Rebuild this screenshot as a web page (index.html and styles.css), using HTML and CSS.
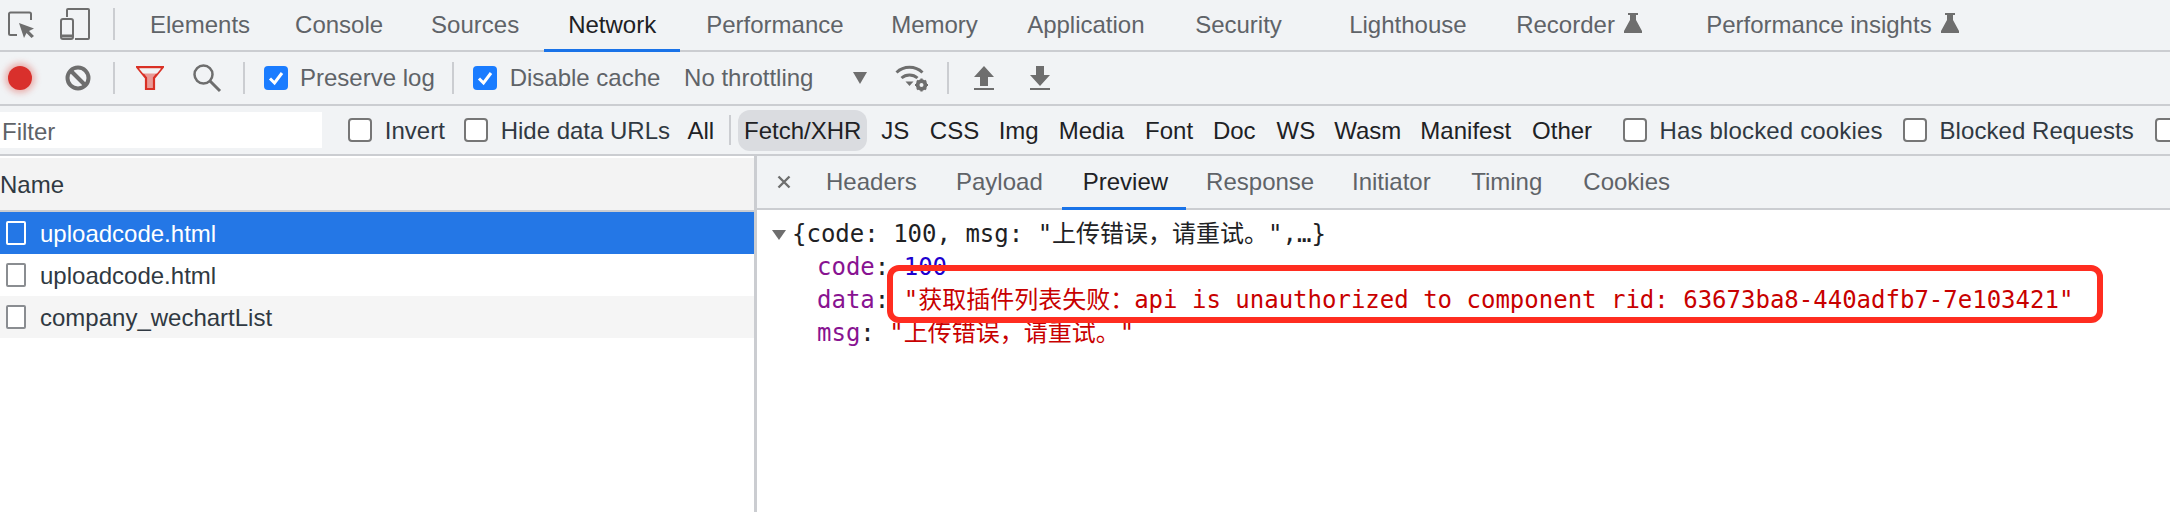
FILE: index.html
```html
<!DOCTYPE html>
<html lang="en">
<head>
<meta charset="utf-8">
<title>DevTools Network</title>
<link rel="stylesheet" href="styles.css">
</head>
<body>
<div class="devtools">
  <div class="bar tabs-main">
    <svg class="ic-inspect" width="28" height="28" viewBox="0 0 28 28"><path d="M9 24H2.500A1.500 1.500 0 0 1 1 22.500V3a1.500 1.500 0 0 1 1.500-1.500h19A1.500 1.500 0 0 1 23 3v6" fill="none" stroke="#6e6e6e" stroke-width="2"/><path d="M11 12l15 5.500-5 2.500 5 5-2.500 2-5-5-2.500 5z" fill="#6e6e6e"/></svg>
    <svg class="ic-device" width="30" height="32" viewBox="0 0 30 32"><path d="M7 9V2a1 1 0 0 1 1-1h20a1 1 0 0 1 1 1v28a1 1 0 0 1-1 1H15" fill="none" stroke="#6e6e6e" stroke-width="2"/><rect x="1" y="11" width="12" height="20" rx="2" fill="none" stroke="#6e6e6e" stroke-width="2"/><path d="M1 28h12" stroke="#6e6e6e" stroke-width="3"/></svg>
    <span class="vdiv first-div"></span>
    <span class="tab t-elements">Elements</span>
    <span class="tab t-console">Console</span>
    <span class="tab t-sources">Sources</span>
    <span class="tab t-network active">Network</span>
    <span class="tab t-performance">Performance</span>
    <span class="tab t-memory">Memory</span>
    <span class="tab t-application">Application</span>
    <span class="tab t-security">Security</span>
    <span class="tab t-lighthouse">Lighthouse</span>
    <span class="tab t-recorder">Recorder</span>
    <svg class="flask" width="18" height="20" viewBox="0 0 18 20"><path d="M4 0h10v2h-2v5l6 11v2H0v-2L6 7V2H4z" fill="#6e6e6e"/></svg>
    <span class="tab t-insights">Performance insights</span>
    <svg class="flask" width="18" height="20" viewBox="0 0 18 20"><path d="M4 0h10v2h-2v5l6 11v2H0v-2L6 7V2H4z" fill="#6e6e6e"/></svg>
  </div>

  <div class="bar toolbar">
    <span class="record"></span>
    <svg class="ic-clear" width="26" height="26" viewBox="0 0 26 26"><circle cx="13" cy="13" r="10.500" fill="none" stroke="#6e6e6e" stroke-width="4"/><path d="M6 6l14 14" stroke="#6e6e6e" stroke-width="4"/></svg>
    <span class="vdiv d-clear"></span>
    <svg class="ic-funnel" width="28" height="24" viewBox="0 0 28 24"><path d="M1 1h26L18 12v11h-8V12z" fill="#e99a96" stroke="#d93025" stroke-width="2.200"/><path d="M3 2.500h22l-4 5H7z" fill="#f1f3f4"/></svg>
    <svg class="ic-search" width="30" height="30" viewBox="0 0 30 30"><circle cx="11.500" cy="11.500" r="9" fill="none" stroke="#6e6e6e" stroke-width="2.500"/><path d="M18 18l10 10" stroke="#6e6e6e" stroke-width="3"/></svg>
    <span class="vdiv d-search"></span>
    <span class="cb on c-preserve"><svg width="24" height="24" viewBox="0 0 24 24"><path d="M6 12.500l4.500 4.500L18 7" fill="none" stroke="#fff" stroke-width="3"/></svg></span>
    <span class="lbl l-preserve">Preserve log</span>
    <span class="vdiv d-preserve"></span>
    <span class="cb on c-disable"><svg width="24" height="24" viewBox="0 0 24 24"><path d="M6 12.500l4.500 4.500L18 7" fill="none" stroke="#fff" stroke-width="3"/></svg></span>
    <span class="lbl l-disable">Disable cache</span>
    <span class="lbl l-throttle">No throttling</span>
    <span class="caret"></span>
    <svg class="ic-wifi" width="34" height="28" viewBox="0 0 34 28"><path d="M1.500 8.500a19 19 0 0 1 26 0M6.500 14a12 12 0 0 1 16 0" fill="none" stroke="#6e6e6e" stroke-width="3"/><path d="M10.500 17.500h8l-4 4.500z" fill="#6e6e6e"/><circle cx="26.500" cy="21" r="4.300" fill="none" stroke="#6e6e6e" stroke-width="3"/><path d="M26.500 14.500v13M20 21h13M22 16.500l9 9M31 16.500l-9 9" stroke="#6e6e6e" stroke-width="2.200"/><circle cx="26.500" cy="21" r="2" fill="#f1f3f4"/></svg>
    <span class="vdiv d-wifi"></span>
    <svg class="ic-up" width="20" height="24" viewBox="0 0 20 24"><path d="M10 0l10 11h-6v9H6v-9H0z" fill="#6e6e6e"/><path d="M0 23h20" stroke="#6e6e6e" stroke-width="2"/></svg>
    <svg class="ic-down" width="20" height="24" viewBox="0 0 20 24"><path d="M6 0h8v9h6L10 20 0 9h6z" fill="#6e6e6e"/><path d="M0 23h20" stroke="#6e6e6e" stroke-width="2"/></svg>
  </div>

  <div class="bar filters">
    <span class="filter-input">Filter</span>
    <span class="cb c-invert"></span><span class="flbl l-invert">Invert</span>
    <span class="cb c-hide"></span><span class="flbl l-hide">Hide data URLs</span>
    <span class="ft f-all">All</span>
    <span class="vdiv d-all"></span>
    <span class="ft pill">Fetch/XHR</span>
    <span class="ft f-js">JS</span>
    <span class="ft f-css">CSS</span>
    <span class="ft f-img">Img</span>
    <span class="ft f-media">Media</span>
    <span class="ft f-font">Font</span>
    <span class="ft f-doc">Doc</span>
    <span class="ft f-ws">WS</span>
    <span class="ft f-wasm">Wasm</span>
    <span class="ft f-manifest">Manifest</span>
    <span class="ft f-other">Other</span>
    <span class="cb c-cookies"></span><span class="flbl l-cookies">Has blocked cookies</span>
    <span class="cb c-blocked"></span><span class="flbl l-blocked">Blocked Requests</span>
    <span class="cb c-last"></span>
  </div>

  <div class="main">
    <section class="list">
      <div class="list-head">Name</div>
      <div class="row selected"><span class="file"></span><span class="fname">uploadcode.html</span></div>
      <div class="row"><span class="file"></span><span class="fname">uploadcode.html</span></div>
      <div class="row odd"><span class="file"></span><span class="fname">company_wechartList</span></div>
    </section>
    <section class="detail">
      <div class="detail-tabs">
        <svg class="ic-close" width="14" height="14" viewBox="0 0 14 14"><path d="M1.500 1.500l11 11M12.500 1.500l-11 11" stroke="#6e6e6e" stroke-width="2.400"/></svg>
        <span class="tab d-headers">Headers</span>
        <span class="tab d-payload">Payload</span>
        <span class="tab d-preview active">Preview</span>
        <span class="tab d-response">Response</span>
        <span class="tab d-initiator">Initiator</span>
        <span class="tab d-timing">Timing</span>
        <span class="tab d-cookies">Cookies</span>
      </div>
      <div class="tree">
        <div class="line top"><span class="tri"></span>{code: 100, msg: "上传错误，请重试。",…}</div>
        <div class="line child"><span class="key">code</span>: <span class="num">100</span></div>
        <div class="line child"><span class="key">data</span>: <span class="str">"获取插件列表失败：api is unauthorized to component rid: 63673ba8-440adfb7-7e103421"</span></div>
        <div class="line child"><span class="key">msg</span>: <span class="str">"上传错误，请重试。"</span></div>
      </div>
    </section>
    <div class="annotation"></div>
  </div>
</div>
</body>
</html>
```
FILE: styles.css
```css
* { box-sizing: border-box; }
html, body { margin: 0; padding: 0; background: #fff; }
body { width: 2170px; height: 512px; overflow: hidden; }
.devtools {
  width: 2170px;
  height: 512px;
  display: flex;
  flex-direction: column;
  font-family: "Liberation Sans", Arial, sans-serif;
  font-size: 24px;
  color: #5f6368;
}
.bar {
  display: flex;
  align-items: center;
  background: #f1f3f5;
  white-space: nowrap;
  flex: none;
}
.vdiv { flex: none; width: 2px; height: 32px; background: #cbcdd1; }

/* top tabs */
.tabs-main { height: 52px; border-bottom: 2px solid #cbcdd1; padding-left: 8px; }
.tabs-main svg { flex: none; }
.ic-device { margin-left: 24px; margin-top: -2px; }
.first-div { margin-left: 23px; margin-top: -2px; }
.tab { flex: none; height: 100%; display: flex; align-items: center; position: relative; }
.active { color: #202124; }
.active::after { content: ""; position: absolute; left: 0; right: 0; bottom: -2px; height: 3px; background: #1a73e8; }
.t-elements { margin-left: 35px; }
.t-console { margin-left: 45px; }
.t-sources { margin-left: 48px; }
.t-network { margin-left: 25px; padding: 0 24px; }
.t-performance { margin-left: 26px; }
.t-memory { margin-left: 47.600px; }
.t-application { margin-left: 49.300px; }
.t-security { margin-left: 50.600px; }
.t-lighthouse { margin-left: 67.300px; }
.t-recorder { margin-left: 49.600px; }
.tabs-main .flask { margin-left: 9.300px; margin-top: -4px; }
.t-insights { margin-left: 64px; }

/* toolbar */
.toolbar { height: 54px; border-bottom: 2px solid #cbcdd1; padding-left: 8px; }
.record {
  flex: none;
  width: 24px;
  height: 24px;
  border-radius: 50%;
  background: #d9302c;
  box-shadow: 0 0 6px 3px rgba(217, 48, 37, .35);
}
.ic-clear { flex: none; margin-left: 33px; }
.d-clear { margin-left: 22px; }
.ic-funnel { flex: none; margin-left: 21px; }
.ic-search { flex: none; margin-left: 28px; }
.d-search { margin-left: 21px; }
.cb {
  flex: none;
  width: 24px;
  height: 24px;
  background: #fff;
  border: 2px solid #767676;
  border-radius: 4px;
  display: block;
}
.cb.on { background: #1a7cff; border: 0; }
.cb svg { display: block; }
.c-preserve { margin-left: 19px; }
.lbl { flex: none; }
.l-preserve { margin-left: 12px; }
.d-preserve { margin-left: 17.300px; }
.c-disable { margin-left: 19px; }
.l-disable { margin-left: 12.600px; }
.l-throttle { margin-left: 23.700px; }
.caret {
  flex: none;
  margin-left: 39.300px;
  width: 0;
  height: 0;
  border-left: 7px solid transparent;
  border-right: 7px solid transparent;
  border-top: 12px solid #6e6e6e;
}
.ic-wifi { flex: none; margin-left: 28.300px; }
.d-wifi { margin-left: 17.700px; }
.ic-up { flex: none; margin-left: 25.300px; }
.ic-down { flex: none; margin-left: 36px; }

/* filter row */
.filters { height: 48px; color: #202124; }
.filter-input {
  flex: none;
  width: 322px;
  height: 36px;
  background: #fff;
  color: #5f6368;
  padding: 2px 0 0 2px;
  line-height: 36px;
}
.flbl { flex: none; color: #303942; padding-top: 2px; }
.c-invert { margin-left: 26px; }
.l-invert { margin-left: 12.800px; }
.c-hide { margin-left: 19px; }
.l-hide { margin-left: 12.800px; }
.ft { flex: none; padding-top: 2px; }
.f-all { margin-left: 17.400px; }
.d-all { margin-left: 15px; height: 30px; }
.pill {
  margin-left: 7.300px;
  width: 128.500px;
  height: 41px;
  padding-top: 0;
  line-height: 41px;
  text-align: center;
  border-radius: 12px;
  background: #dadce0;
}
.f-js { margin-left: 14.300px; }
.f-css { margin-left: 20.600px; }
.f-img { margin-left: 19.500px; }
.f-media { margin-left: 20px; }
.f-font { margin-left: 21px; }
.f-doc { margin-left: 19.800px; }
.f-ws { margin-left: 21px; }
.f-wasm { margin-left: 19px; }
.f-manifest { margin-left: 19px; }
.f-other { margin-left: 21px; }
.c-cookies { margin-left: 31px; }
.l-cookies { margin-left: 12.500px; letter-spacing: .15px; }
.c-blocked { margin-left: 20.600px; }
.l-blocked { margin-left: 12.400px; letter-spacing: .05px; }
.c-last { margin-left: 21px; }

/* main split */
.main { position: relative; flex: 1; display: flex; min-height: 0; border-top: 2px solid #cbcdd1; }
.list { flex: none; width: 757px; border-right: 3px solid #cbcdd1; color: #303942; padding-top: 2px; }
.list-head {
  height: 54px;
  line-height: 54px;
  background: #f3f3f3;
  color: #303942;
  border-bottom: 2px solid #cbcdd1;
}
.row { height: 42px; display: flex; align-items: center; padding-left: 6px; }
.row.selected { background: #2477e6; color: #fff; }
.row.odd { background: #f5f5f5; }
.fname { padding-top: 2px; }
.file { flex: none; width: 20px; height: 24px; background: #fff; border: 2px solid #8a8d91; border-radius: 2px; margin-right: 14px; }
.selected .file { background: transparent; border-color: #fff; }
.detail { flex: 1; min-width: 0; }
.detail-tabs {
  height: 54px;
  display: flex;
  align-items: center;
  background: #f1f3f5;
  border-bottom: 2px solid #cbcdd1;
}
.ic-close { flex: none; margin-left: 20px; }
.d-headers { margin-left: 35px; }
.d-payload { margin-left: 39.300px; }
.d-preview { margin-left: 19px; padding: 0 18px 0 21px; }
.d-response { margin-left: 20px; }
.d-initiator { margin-left: 37.800px; }
.d-timing { margin-left: 40.500px; }
.d-cookies { margin-left: 41px; }

/* json tree */
.tree {
  padding-top: 8px;
  font-family: "DejaVu Sans Mono", "Noto Sans CJK SC", monospace;
  font-size: 24px;
  color: #202124;
}
.line { height: 33px; line-height: 33px; white-space: nowrap; }
.top { display: flex; align-items: center; padding-left: 15px; }
.tri {
  flex: none;
  width: 0;
  height: 0;
  margin-right: 6px;
  border-left: 7px solid transparent;
  border-right: 7px solid transparent;
  border-top: 10px solid #6e6e6e;
}
.child { padding-left: 60px; }
.key { color: #881391; }
.num { color: #1c00cf; }
.str { color: #c80000; }

.annotation {
  position: absolute;
  left: 887px;
  top: 109px;
  width: 1216px;
  height: 58px;
  border: 6px solid #ff2d20;
  border-radius: 12px;
}
```
